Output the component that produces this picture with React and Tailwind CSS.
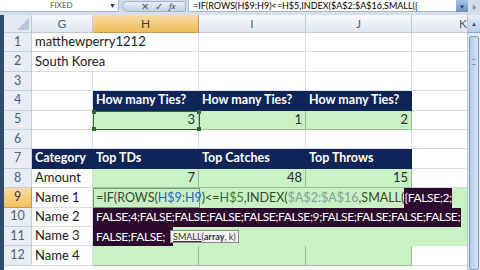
import React from 'react';

const font = { fontFamily: 'Lato, "Liberation Sans", sans-serif' };

function RowHead({ n, active }) {
  return (
    <div
      className={`flex items-center justify-center border-b border-r text-[12.5px] ${
        active
          ? 'bg-gradient-to-b from-[#f9dba0] to-[#f2bf5c] border-[#c89a4a] text-[#3d3d3d]'
          : 'bg-[#e8edf4] border-[#c3cfde] text-[#4e6080]'
      }`}
    >
      {n}
    </div>
  );
}

function ColHead({ label, active, className = '' }) {
  return (
    <div
      className={`flex items-center justify-center border-b border-r text-[12px] ${
        active
          ? 'bg-gradient-to-b from-[#fadca3] to-[#f1bd58] border-[#c89a4a] text-[#3d3d3d]'
          : 'bg-gradient-to-b from-[#f7f9fb] to-[#dfe6ef] border-[#bfcada] text-[#4e6080]'
      } ${className}`}
    >
      {label}
    </div>
  );
}

function Cell({ children, className = '' }) {
  return (
    <div
      className={`flex items-center whitespace-nowrap overflow-hidden px-[3px] border-b border-r text-[13px] ${className}`}
    >
      {children}
    </div>
  );
}

const W = 'bg-white border-[#dadde2] text-[#1b1b1b]';
const N = 'bg-[#0f2557] border-[#0f2557] text-white font-bold !text-[12.5px]';
const G = 'bg-[#c9f2c4] border-[#9fb99c] text-[#2b2b2b] justify-end';
const GE = 'bg-[#c9f2c4] border-[#c9f2c4]';

export default function App() {
  const rows = [
    [1, [['matthewperry1212', W, 'col-span-2'], ['', W], ['', W], ['', W]]],
    [2, [['South Korea', W, 'col-span-2'], ['', W], ['', W], ['', W]]],
    [3, [['', W], ['', W], ['', W], ['', W], ['', W]]],
    [4, [['', W], ['How many Ties?', N], ['How many Ties?', N], ['How many Ties?', N], ['', W]]],
    [5, [['', W], ['3', G], ['1', G], ['2', G], ['', W]]],
    [6, [['', W], ['', W], ['', W], ['', W], ['', W]]],
    [7, [['Category', N], ['Top TDs', N], ['Top Catches', N], ['Top Throws', N], ['', W]]],
    [8, [['Amount', W], ['7', G], ['48', G], ['15', G], ['', W]]],
    [9, [['Name 1', W], ['', GE], ['', GE], ['', GE], ['', GE]]],
    [10, [['Name 2', W], ['', GE], ['', GE], ['', GE], ['', GE]]],
    [11, [['Name 3', W], ['', GE], ['', GE], ['', GE], ['', GE]]],
    [12, [['Name 4', W], ['', G], ['', G], ['', G], ['', W]]],
  ];

  return (
    <div className="w-[480px] h-[270px] overflow-hidden bg-[#d6dfeb] flex flex-col" style={font}>
      {/* formula bar */}
      <div className="flex h-[12px] shrink-0 bg-[#d3ddea]">
        <div className="w-[119px] bg-white relative border-r border-b border-[#a8bad2]">
          <span className="absolute left-[50px] top-[1px] text-[8px] leading-[9px] text-[#555]">FIXED</span>
          <span className="absolute right-[2px] top-[1px] text-[7px] leading-[9px] text-[#333]">▼</span>
        </div>
        <div className="w-[69px] flex items-center pl-[3px]">
          <div className="flex items-center gap-[6px] h-[11px] w-[64px] pl-[18px] rounded-l-full bg-gradient-to-b from-[#e9eff7] to-[#c4d3e6] border border-[#9fb4cf]">
            <span className="text-[10px] leading-[10px] text-[#5b5b5b]">✕</span>
            <span className="text-[10px] leading-[10px] text-[#5b5b5b]">✓</span>
            <span className="text-[9px] leading-[10px] italic text-[#4a4a4a] font-serif">fx</span>
          </div>
        </div>
        <div className="w-[268px] bg-white border-b border-l border-[#a8bad2] text-[9px] leading-[11px] text-black pl-[4px] whitespace-nowrap overflow-hidden">
          {'=IF(ROWS(H$9:H9)<=H$5,INDEX($A$2:$A$16,SMALL({'}
        </div>
        <div className="w-[12px] bg-gradient-to-b from-[#a9c3e3] to-[#6b91c2] flex items-center justify-center text-[6px] text-[#1d3a63]">▼</div>
        <div className="w-[12px] flex items-center justify-center text-[9px] leading-[9px] text-[#3a4f6e]">»</div>
      </div>
      <div className="h-[3px] shrink-0" />

      <div className="flex flex-1 min-h-0">
        <div className="w-[4px] bg-[#2f4a6f]" />
        <div className="w-[463px] overflow-hidden relative bg-white">
          <div className="grid grid-cols-[28px_61px_106px_107px_106px_106px] grid-rows-[18px_repeat(12,19.4px)] w-[514px]">
            <div className="bg-[#e3e9f1] border-b border-r border-[#bfcada] relative">
              <svg className="absolute right-[2px] bottom-[2px]" width="12" height="12" viewBox="0 0 12 12">
                <polygon points="12,0 12,12 0,12" fill="#b9c8db" />
              </svg>
            </div>
            <ColHead label="G" />
            <ColHead label="H" active />
            <ColHead label="I" />
            <ColHead label="J" />
            <ColHead label="K" className="justify-end pr-[50px]" />
            {rows.map(([n, cells]) => (
              <React.Fragment key={n}>
                <RowHead n={n} active={n === 9} />
                {cells.map(([text, cls, span], i) => (
                  <Cell key={i} className={`${cls} ${span || ''}`}>
                    {text}
                  </Cell>
                ))}
              </React.Fragment>
            ))}
          </div>

          {/* range finder around H5 */}
          <div className="absolute left-[89px] top-[95.6px] w-[107px] h-[19.4px] border border-[#2b6b2b]">
            <div className="absolute -left-[2px] -top-[2px] w-[4px] h-[4px] bg-[#2b6b2b]" />
            <div className="absolute -right-[2px] -top-[2px] w-[4px] h-[4px] bg-[#2b6b2b]" />
            <div className="absolute -left-[2px] -bottom-[2px] w-[4px] h-[4px] bg-[#2b6b2b]" />
            <div className="absolute -right-[2px] -bottom-[2px] w-[4px] h-[4px] bg-[#2b6b2b]" />
          </div>

          {/* in-cell edit box */}
          <div className="absolute left-[89px] top-[173.2px] w-[366px] h-[58.2px] bg-[#c9f2c4] text-[12.5px] whitespace-nowrap">
            <div className="absolute left-0 top-0 w-[107px] h-[19.4px] border border-[#6f9d6f]" />
            <div className="h-[19.4px] flex items-center pl-[3px] relative">
              <span className="text-[#2f4a2f]">=IF(ROWS(</span>
              <span className="text-[#2f62b5]">H$9:H9</span>
              <span className="text-[#2f4a2f]">{')<='}</span>
              <span className="text-[#2d7a3a]">H$5</span>
              <span className="text-[#2f4a2f]">,INDEX(</span>
              <span className="text-[#7fa19d]">$A$2:$A$16</span>
              <span className="text-[#2f4a2f]">,SMALL(</span>
              <span className="bg-[#2b0a2e] text-white h-[19.4px] flex items-center text-[12px] tracking-[-0.35px]">{'{FALSE;2;'}</span>
            </div>
            <div className="h-[19.4px] flex items-center">
              <span className="bg-[#2b0a2e] text-white h-[19.4px] flex items-center pl-[3px] pr-[1px] text-[12px] tracking-[-0.4px]">
                FALSE;4;FALSE;FALSE;FALSE;FALSE;FALSE;9;FALSE;FALSE;FALSE;FALSE;
              </span>
            </div>
            <div className="h-[19.4px] flex items-center relative">
              <span className="bg-[#2b0a2e] text-white h-[19.4px] flex items-center pl-[3px] w-[80px] overflow-hidden text-[12px] tracking-[-0.4px]">
                FALSE;FALSE;
              </span>
              <div className="absolute left-[77px] top-[3px] h-[13px] px-[2px] flex items-center bg-[#f4f4f4] border border-[#8a8a8a] text-[9px] text-[#333]">
                <span className="underline">SMALL</span>(<span className="font-bold">array</span>, k)
              </div>
            </div>
          </div>
        </div>

        {/* vertical scrollbar */}
        <div className="w-[13px] flex flex-col bg-[#e4eaf2] border-l border-[#b7c6da]">
          <div className="h-[18px] bg-gradient-to-b from-[#e7eef8] to-[#b9cce6] border-b border-[#8aa6cc] flex items-center justify-center text-[6px] text-[#3a4f6e]">▲</div>
          <div className="flex-1 mt-[3px] mx-[1px] bg-gradient-to-r from-[#b7cbe6] to-[#d7e3f2] border border-[#7f9cc5] rounded-[2px] relative">
            <div className="absolute left-[2px] right-[2px] top-[22px] h-[6px] border-y border-[#7f9cc5]" />
          </div>
        </div>
      </div>
    </div>
  );
}
